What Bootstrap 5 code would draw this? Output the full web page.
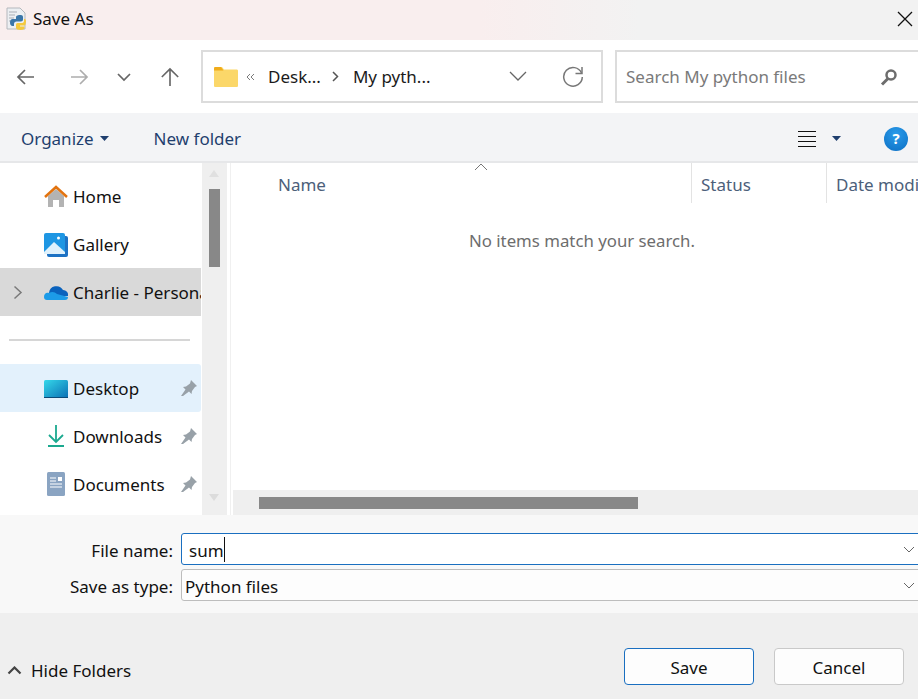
<!DOCTYPE html>
<html lang="en">
<head>
    <meta charset="UTF-8">
    <title>Save As</title>
    <link href="https://cdn.jsdelivr.net/npm/bootstrap@5.3.0/dist/css/bootstrap.min.css" rel="stylesheet">
    <style>
        html, body { height: 100%; overflow: hidden; }
        body { font-family: "Noto Sans", "Open Sans", sans-serif; font-size: 17px; color: #111; background: #fff; }
        .dlg { width: 918px; height: 699px; overflow: hidden; }
        .dlg-title { height: 40px; padding: 0 0 3px 5px; flex-shrink: 0; background: linear-gradient(90deg, #f9eeee 0, #f9eeee 480px, #f2f2f2 640px); }
        .dlg-title .close-x { margin-left: auto; margin-right: 3px; }
        .nav-strip { height: 73px; padding: 10px 0; flex-shrink: 0; }
        .nav-btns { width: 201px; flex-shrink: 0; }
        .addr-box { width: 402px; height: 53px; border: 2px solid #dcdcdc; padding: 0 17px 0 11px; flex-shrink: 0; }
        .addr-box .crumb { color: #1b1b1b; }
        .search-box { width: 320px; height: 53px; border: 2px solid #dcdcdc; margin-left: 12px; padding: 0 0 0 9px; color: #7a7a7a; flex-shrink: 0; }
        .cmd-bar { height: 50px; background: #f3f4f6; border-bottom: 2px solid #e6e7e9; color: #1f3f6e; padding: 3px 0 0 21px; flex-shrink: 0; }
        .main-pane { height: 352px; flex-shrink: 0; }
        .side-col { width: 201px; padding-top: 10px; overflow: hidden; flex-shrink: 0; }
        .side-row { height: 48px; white-space: nowrap; overflow: hidden; padding-left: 44px; }
        .side-row.lowered span { padding-top: 2px; }
        .side-row .ico { width: 24px; height: 24px; margin-right: 5px; flex-shrink: 0; }
        .side-row.picked { background: #d9d9d9; padding-left: 13px; margin-top: -1px; }
        .side-row.pinned { background: #e3f1fc; border-radius: 0 3px 3px 0; }
        .side-row .pin-ico { margin-left: auto; margin-right: 4px; }
        .side-sep { height: 2px; background: #d6d6d6; margin: 23px 11px 23px 9px; }
        .side-sep + .side-row { margin-top: 1px; }
        .vscroll { width: 25px; margin-left: 1px; background: #efefef; flex-shrink: 0; padding-top: 26px; }
        .vthumb { width: 11px; height: 78px; background: #888; margin-left: 7px; }
        .v-arrow { width: 0; height: 0; margin-left: 7px; border-left: 5.5px solid transparent; border-right: 5.5px solid transparent; }
        .v-arrow.up { border-bottom: 7px solid #e0e0e0; margin-top: -19px; margin-bottom: 12px; }
        .v-arrow.down { border-top: 7px solid #dcdcdc; margin-top: 227px; }
        .list-col { margin-left: 3px; width: 688px; border-left: 1px solid #f0f0f0; }
        .head-row { height: 40px; color: #4c607a; flex-shrink: 0; }
        .head-cell { height: 40px; padding-top: 9px; white-space: nowrap; flex-shrink: 0; }
        .head-name { width: 460px; padding-left: 47px; }
        .head-name svg { margin-left: 148px; margin-top: -9px; }
        .head-status { width: 135px; padding-left: 9px; border-left: 1px solid #e3e3e3; }
        .head-date { width: 100px; padding-left: 9px; border-left: 1px solid #e3e3e3; overflow: hidden; }
        .empty-msg { color: #6d6d6d; text-align: center; margin: 25px 0 0 121px; width: 460px; font-size: 16.8px; }
        .hscroll { height: 25px; margin-left: 2px; background: #efefef; margin-top: auto; padding: 7px 0 0 26px; }
        .hthumb { width: 379px; height: 12px; background: #888; }
        .form-pane { height: 98px; background: #f8f8f8; padding-top: 18px; flex-shrink: 0; }
        .form-line { height: 32px; margin-bottom: 4px; }
        .form-line label { width: 173px; text-align: right; margin-right: 8px; padding-top: 4px; flex-shrink: 0; }
        .fake-input { width: 745px; height: 32px; border: 1px solid #bdbdbd; border-radius: 3px 0 0 3px; background: #fdfdfd; padding: 3px 10px 0 3px; flex-shrink: 0; }
        .fake-input.live { border-color: #1a6fc0; background: #fff; padding-left: 7px; }
        .fake-input svg { margin-top: -3px; }
        .caret-bar { width: 1px; height: 25px; background: #111; margin-top: -3px; }
        .foot-pane { height: 86px; background: #efefef; padding: 35px 0 0 7px; flex-shrink: 0; }
        .foot-pane .hide-link { margin-top: 10px; }
        .foot-btn { width: 130px; height: 37px; padding: 2px 0 0; font-size: 17px; background: #fdfdfd; border: 1px solid #c9c9c9; border-radius: 4px; color: #111; }
        .foot-btn.go { border-color: #1a6fc0; }
        .foot-btns { margin-left: auto; margin-right: 14px; gap: 20px; }
        .help-dot { width: 24px; height: 24px; border-radius: 50%; background: radial-gradient(circle at 50% 30%, #2a9bea, #0c6fc4); color: #fff; font-size: 15px; font-weight: 700; line-height: 1; }
    </style>
</head>
<body>
<div class="dlg d-flex flex-column">
    <!-- Title bar -->
    <div class="dlg-title d-flex align-items-center">
        <svg width="24" height="24" viewBox="0 0 24 24" class="me-1">
            <path d="M2 1h13l5 5v16H2z" fill="#eceff2" stroke="#b4b8bd"/>
            <path d="M4 5h8M4 8h6M4 11h5M4 14h5" stroke="#a9aeb5"/>
            <path d="M16 8c-3 0-5 .6-5 2v2H7.5C6 12 5 13.2 5 15.5S6 19 7.5 19H9v-2.2c0-1.2 1-2.3 2.5-2.3H16c1.200 0 2-.8 2-2V10c0-1.300-1-2-2-2z" fill="#3a76a8"/>
            <path d="M21 14c0-1.400-.8-2-2-2v2c0 1.500-1.200 2-2.500 2H12.500c-1 0-1.500.8-1.500 1.800V21c0 1.300 2 2 4.500 2s4-.8 4-2v-1.500H15v-1h4.500C20.500 18.500 21 16.500 21 14z" fill="#f4c93d"/>
        </svg>
        <span>Save As</span>
        <svg class="close-x" width="20" height="20" viewBox="0 0 20 20"><path d="M3 3l14 14M17 3L3 17" stroke="#111" stroke-width="1.300" fill="none"/></svg>
    </div>

    <!-- Address row -->
    <div class="nav-strip d-flex">
        <div class="nav-btns d-flex align-items-center">
            <svg class="ms-3" width="20" height="20" viewBox="0 0 20 20"><path d="M18 10H2M9 3l-7 7 7 7" stroke="#666" stroke-width="1.700" fill="none"/></svg>
            <svg style="margin-left:33px" width="20" height="20" viewBox="0 0 20 20"><path d="M2 10h16M11 3l7 7-7 7" stroke="#adadad" stroke-width="1.700" fill="none"/></svg>
            <svg style="margin-left:28px" width="14" height="14" viewBox="0 0 14 14"><path d="M1 4l6 6 6-6" stroke="#666" stroke-width="1.700" fill="none"/></svg>
            <svg style="margin-left:29px" width="20" height="20" viewBox="0 0 22 22"><path d="M11 21V2M2 11l9-9 9 9" stroke="#666" stroke-width="1.800" fill="none"/></svg>
        </div>
        <div class="addr-box d-flex align-items-center">
            <svg width="24" height="20" viewBox="0 0 24 20"><path d="M0 1.500C0 .7.600 0 1.300 0H8l2 2.500h12.700c.7 0 1.300.6 1.300 1.300V18.700c0 .7-.6 1.300-1.300 1.300H1.300C.6 20 0 19.400 0 18.700z" fill="#fbd769"/><path d="M0 1.500C0 .7.600 0 1.300 0H7l2.500 3.500H0z" fill="#f0ac1b"/></svg>
            <svg class="ms-2" width="9" height="8" viewBox="0 0 9 8"><path d="M4 1L1 4l3 3M8 1L5 4l3 3" stroke="#7b7b7b" fill="none"/></svg>
            <span class="crumb" style="margin-left:13px">Desk...</span>
            <svg style="margin-left:11px" width="7" height="11" viewBox="0 0 7 11"><path d="M1 1l4.500 4.500L1 10" stroke="#555" stroke-width="1.500" fill="none"/></svg>
            <span class="crumb" style="margin-left:14px">My pyth...</span>
            <svg class="ms-auto" width="18" height="11" viewBox="0 0 18 11"><path d="M1 1l8 8 8-8" stroke="#666" stroke-width="1.300" fill="none"/></svg>
            <svg style="margin-left:35px" width="22" height="22" viewBox="0 0 22 22"><path d="M19.500 7A9.300 9.300 0 1 0 20.300 11" stroke="#777" stroke-width="1.500" fill="none"/><path d="M20 1v6.500h-6.500" stroke="#777" stroke-width="1.500" fill="none"/></svg>
        </div>
        <div class="search-box d-flex align-items-center">
            <span>Search My python files</span>
            <svg style="margin-left:74px" width="18" height="18" viewBox="0 0 18 18"><circle cx="11" cy="7" r="4.500" stroke="#6d6d6d" stroke-width="2.500" fill="none"/><path d="M8 10.500L2 16.500" stroke="#6d6d6d" stroke-width="3"/></svg>
        </div>
    </div>

    <!-- Command bar -->
    <div class="cmd-bar d-flex align-items-center">
        <span>Organize</span>
        <svg style="margin-left:6px" width="9" height="5" viewBox="0 0 9 5"><path d="M0 0h9L4.500 5z" fill="#1f3f6e"/></svg>
        <span style="margin-left:45px">New folder</span>
        <svg class="ms-auto" width="20" height="18" viewBox="0 0 20 18"><path d="M1 1.500h18M1 6.500h18M1 11.500h18M1 16.500h18" stroke="#111"/></svg>
        <svg style="margin-left:15px" width="9" height="5" viewBox="0 0 9 5"><path d="M0 0h9L4.500 5z" fill="#1f3f6e"/></svg>
        <span class="help-dot d-flex align-items-center justify-content-center" style="margin-left:43px;margin-right:10px">?</span>
    </div>

    <!-- Folder tree and file list -->
    <div class="main-pane d-flex">
        <div class="side-col">
            <div class="side-row d-flex align-items-center">
                <svg class="ico" viewBox="0 0 24 24"><path d="M4 11l8-7 8 7v11h-5v-7H9v7H4z" fill="#b3b3b3"/><path d="M1 12l11-10 11 10" stroke="#e2730f" stroke-width="2.500" fill="none"/></svg>
                <span>Home</span>
            </div>
            <div class="side-row d-flex align-items-center">
                <svg class="ico" viewBox="0 0 24 24"><rect x="3" y="3" width="21" height="21" rx="2" fill="#1d72c4"/><rect x="0" y="0" width="21" height="21" rx="2" fill="#1e96e3"/><path d="M0 19l10-10 11 10v2H0z" fill="#dff1fc"/><circle cx="14.500" cy="5" r="1.500" fill="#fff"/></svg>
                <span>Gallery</span>
            </div>
            <div class="side-row picked lowered d-flex align-items-center">
                <svg width="10" height="15" viewBox="0 0 10 15" style="margin-right:21px;flex-shrink:0"><path d="M1.500 1.500l6.500 6-6.500 6" stroke="#7a7a7a" stroke-width="1.500" fill="none"/></svg>
                <svg class="ico" viewBox="0 0 24 24"><path d="M5 13a7.500 7.500 0 0 1 14-3 5 5 0 0 1 5 6H5z" fill="#0a62bd"/><path d="M0 17c0-3 2-5 5-4 3-2 6-1 8 1l11 3c0 2-1 3-3 3H3c-2 0-3-1-3-3z" fill="#1c9be8"/></svg>
                <span>Charlie - Personal</span>
            </div>
            <div class="side-sep"></div>
            <div class="side-row pinned lowered d-flex align-items-center">
                <svg class="ico" viewBox="0 0 24 24"><defs><linearGradient id="deskFill" x1="0" y1="0" x2="1" y2="1"><stop offset="0" stop-color="#35d8ea"/><stop offset="1" stop-color="#0a6fb4"/></linearGradient></defs><rect x="0" y="4" width="24" height="18" rx="1.500" fill="url(#deskFill)"/><rect x="0" y="21" width="24" height="1" fill="#0b4a78"/></svg>
                <span>Desktop</span>
                <svg class="pin-ico" width="16" height="16" viewBox="0 0 16 16"><path d="M10 0l6 6-2 1-3 4-.5 3L8 11.500 2 16l-2 0 4.500-6.500L2 7l3-.5 4-3z" fill="#98a1a8"/></svg>
            </div>
            <div class="side-row lowered d-flex align-items-center">
                <svg class="ico" viewBox="0 0 24 24"><path d="M12 1v17M5 11l7 7 7-7" stroke="#1ba98f" stroke-width="1.800" fill="none"/><path d="M4 22h16" stroke="#1ba98f" stroke-width="2"/></svg>
                <span>Downloads</span>
                <svg class="pin-ico" width="16" height="16" viewBox="0 0 16 16"><path d="M10 0l6 6-2 1-3 4-.5 3L8 11.500 2 16l-2 0 4.500-6.500L2 7l3-.5 4-3z" fill="#98a1a8"/></svg>
            </div>
            <div class="side-row lowered d-flex align-items-center">
                <svg class="ico" viewBox="0 0 24 24"><rect x="3" y="0" width="18" height="24" rx="1.500" fill="#8aa4c2"/><path d="M6 6h6M6 9h6M6 12h12M6 15h12" stroke="#fff" stroke-width="1.200"/><rect x="14" y="5" width="4" height="4" fill="#fff"/></svg>
                <span>Documents</span>
                <svg class="pin-ico" width="16" height="16" viewBox="0 0 16 16"><path d="M10 0l6 6-2 1-3 4-.5 3L8 11.500 2 16l-2 0 4.500-6.500L2 7l3-.5 4-3z" fill="#98a1a8"/></svg>
            </div>
        </div>
        <div class="vscroll">
            <div class="v-arrow up"></div>
            <div class="vthumb"></div>
            <div class="v-arrow down"></div>
        </div>
        <div class="list-col d-flex flex-column">
            <div class="head-row d-flex">
                <div class="head-cell head-name d-flex">
                    <span>Name</span>
                    <svg width="14" height="8" viewBox="0 0 14 8"><path d="M1 7l6-6 6 6" stroke="#777" fill="none"/></svg>
                </div>
                <div class="head-cell head-status">Status</div>
                <div class="head-cell head-date">Date modified</div>
            </div>
            <div class="empty-msg">No items match your search.</div>
            <div class="hscroll"><div class="hthumb"></div></div>
        </div>
    </div>

    <!-- File name and type -->
    <div class="form-pane">
        <div class="form-line d-flex align-items-center">
            <label>File name:</label>
            <div class="fake-input live d-flex align-items-center">
                <span>sum</span><span class="caret-bar"></span>
                <svg class="ms-auto" width="12" height="7" viewBox="0 0 12 7"><path d="M1 1l5 5 5-5" stroke="#666" fill="none"/></svg>
            </div>
        </div>
        <div class="form-line d-flex align-items-center">
            <label>Save as type:</label>
            <div class="fake-input d-flex align-items-center">
                <span>Python files</span>
                <svg class="ms-auto" width="12" height="7" viewBox="0 0 12 7"><path d="M1 1l5 5 5-5" stroke="#666" fill="none"/></svg>
            </div>
        </div>
    </div>

    <!-- Footer -->
    <div class="foot-pane d-flex align-items-start">
        <div class="hide-link d-flex align-items-center">
            <svg width="15" height="9" viewBox="0 0 15 9"><path d="M1.500 7.500l6-6 6 6" stroke="#444" stroke-width="2.200" fill="none"/></svg>
            <span style="margin-left:9px">Hide Folders</span>
        </div>
        <div class="foot-btns d-flex">
            <button type="button" class="btn foot-btn go">Save</button>
            <button type="button" class="btn foot-btn">Cancel</button>
        </div>
    </div>
</div>
</body>
</html>
